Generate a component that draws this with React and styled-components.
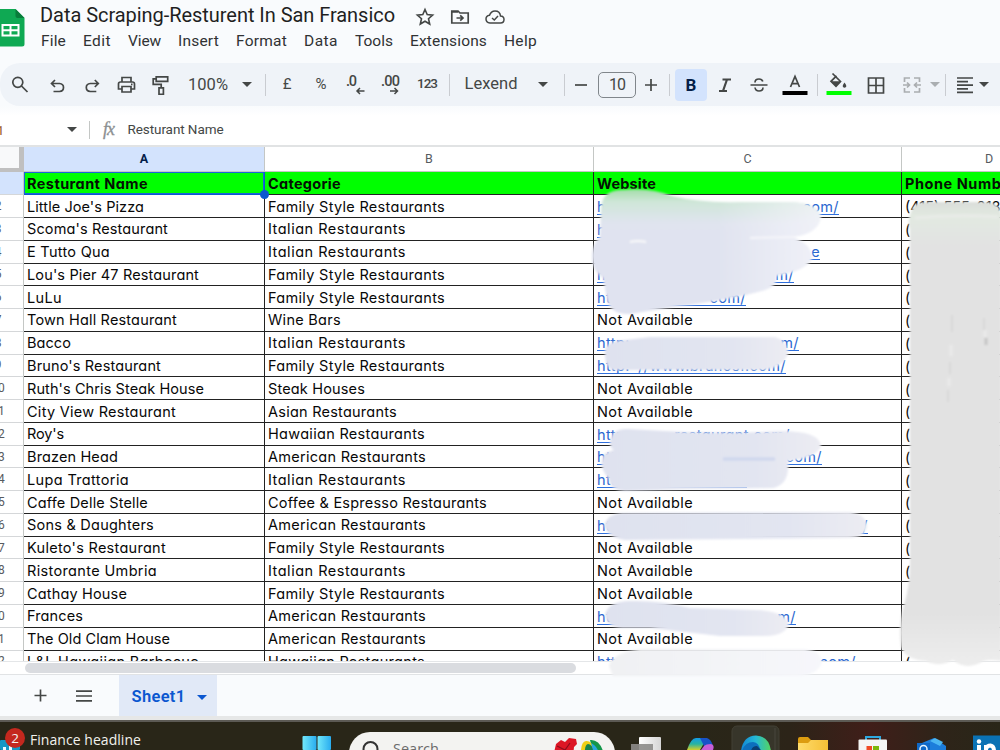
import React, { useLayoutEffect, useRef } from "react";
import styled, { createGlobalStyle, css } from "styled-components";

const Global = createGlobalStyle`
  * { box-sizing: border-box; }
  html, body { margin: 0; padding: 0; overflow: hidden; }
  body { font-family: Roboto, "Liberation Sans", sans-serif; background: #f9fbfd; color: #1f1f1f; }
`;

const Page = styled.div`
  position: relative;
  width: 1000px;
  height: 750px;
  overflow: hidden;
  display: flex;
  flex-direction: column;
  background: #f9fbfd;
`;

/* Text tracked so that it spans an exact width. */
const Span = styled.span`
  display: inline-block;
  white-space: pre;
  flex: none;
  line-height: 1;
`;
function Fit({ w, children, className }) {
  const ref = useRef(null);
  useLayoutEffect(() => {
    const el = ref.current;
    el.style.letterSpacing = "0px";
    const natural = el.getBoundingClientRect().width;
    el.style.letterSpacing = `${(w - natural) / String(children).length}px`;
  }, [w, children]);
  return <Span ref={ref} className={className}>{children}</Span>;
}

/* ---------- header ---------- */
const Header = styled.header`
  display: flex;
  height: 63px;
  flex: none;
`;
const LogoBox = styled.div`
  width: 40px;
  padding-top: 9px;
  flex: none;
  svg { display: block; }
`;
const HeaderBody = styled.div`
  display: flex;
  flex-direction: column;
`;
const TitleLine = styled.div`
  display: flex;
  align-items: center;
  height: 32px;
`;
const Title = styled(Fit)`
  font-size: 20px;
  color: #1f1f1f;
  margin: -2px 20px 0 0;
`;
const TitleIcons = styled.div`
  display: flex;
  align-items: center;
  gap: 15px;
  padding-top: 2px;
  svg { display: block; }
`;
const MenuBar = styled.nav`
  display: flex;
  gap: 17px;
  padding: 2px 0 0 1px;
  font-size: 15.5px;
  color: #303234;
`;

/* ---------- toolbar ---------- */
const Toolbar = styled.div`
  display: flex;
  align-items: center;
  height: 43px;
  flex: none;
  padding-left: 2px;
  border-radius: 20px 0 0 20px;
  background: #eff3f8;
  color: #444746;
`;
const Slot = styled.div`
  width: ${(p) => p.$w}px;
  flex: none;
  height: 43px;
  display: flex;
  align-items: center;
  justify-content: center;
  font-size: ${(p) => p.$size || 16}px;
  font-weight: ${(p) => p.$weight || 400};
  opacity: ${(p) => (p.$dim ? 0.4 : 1)};
  padding-top: ${(p) => p.$down || 0}px;
  padding-bottom: ${(p) => p.$up || 0}px;
  svg { flex: none; display: block; }
`;
const Sep = styled.i`
  width: 1px;
  height: 22px;
  background: #c9ccd1;
`;
const Caret = styled.i`
  border: 5px solid transparent;
  border-top-color: currentColor;
  border-bottom: 0;
  flex: none;
`;
const SizeBox = styled.div`
  width: 38px;
  height: 26px;
  border: 1px solid #80868b;
  border-radius: 5px;
  display: flex;
  align-items: center;
  justify-content: center;
  flex: none;
`;
const BoldButton = styled.div`
  width: 32px;
  height: 32px;
  border-radius: 4px;
  background: #d3e3fd;
  color: #041e49;
  font: 700 17px Roboto, sans-serif;
  display: flex;
  align-items: center;
  justify-content: center;
`;

/* ---------- formula bar ---------- */
const FormulaBar = styled.div`
  height: 41px;
  flex: none;
  display: flex;
  align-items: center;
  padding-top: 8px;
  background: linear-gradient(#f9fbfd 0, #fff 10px);
  border-bottom: 2px solid #e1e3e4;
  color: #444746;
  font-size: 13.5px;
`;
const NameBox = styled.div`
  width: 66px;
  margin-left: -12px;
  color: #9a5a28;
  flex: none;
`;
const CaretBox = styled.div`
  width: 35px;
  flex: none;
  display: flex;
  justify-content: center;
`;
const FxDivider = styled.i`
  width: 1px;
  height: 18px;
  background: #c4c7c5;
  margin-right: 13px;
`;
const Fx = styled.span`
  font: italic 18px "Liberation Serif", serif;
  color: #8c8f91;
  letter-spacing: -1px;
  width: 24.5px;
  -webkit-text-stroke: 0.3px #8c8f91;
`;

/* ---------- sheet ---------- */
const Sheet = styled.main`
  height: 514px;
  flex: none;
  margin-left: -27px;
  width: 1150px;
  overflow: hidden;
  background: #fff;
  display: flex;
  flex-direction: column;
`;
const widths = { n: 51, a: 241, b: 329, c: 308, d: 221 };
const ColHead = styled.div`
  width: ${(p) => widths[p.$c]}px;
  flex: none;
  height: 25.45px;
  display: flex;
  align-items: center;
  justify-content: center;
  padding-right: ${(p) => (p.$c === "d" ? 46 : 0)}px;
  padding-bottom: 2px;
  border-right: 1px solid #c4c7c5;
  border-bottom: 1px solid #c4c7c5;
  font-size: 12.5px;
  color: ${(p) => (p.$on ? "#041e49" : "#575b5f")};
  font-weight: ${(p) => (p.$on ? 700 : 400)};
  background: ${(p) => (p.$on ? "#d3e3fd" : "#fff")};
  ${(p) => p.$c === "n" && css`
    background: #f8f9fa;
    border-right: 5px solid #c0c0c0;
    border-bottom: 4px solid #c0c0c0;
  `}
`;
const Row = styled.div`
  display: flex;
  height: 22.78px;
  flex: none;
`;
const HeadRow = styled(Row)`
  height: 25.45px;
`;
const Num = styled.div`
  width: ${widths.n}px;
  flex: none;
  border-right: 1px solid #c4c7c5;
  border-bottom: 1px solid #d5d7d9;
  background: ${(p) => (p.$on ? "#d3e3fd" : "#fff")};
  font-size: 12px;
  color: #575b5f;
  display: flex;
  align-items: center;
  justify-content: center;
`;
const Cell = styled.div`
  position: relative;
  width: ${(p) => widths[p.$c]}px;
  flex: none;
  padding: 1.6px 0 0 3px;
  display: flex;
  align-items: center;
  border-right: 1px solid #222;
  border-bottom: 1px solid #222;
  color: #080808;
  font-family: Inter, "Open Sans", sans-serif;
  font-feature-settings: "cv11";
  font-size: 14.5px;
  font-weight: 400;
  ${(p) => p.$head && css`
    background: #00ff00;
    font-weight: 700;
    color: #041004;
  `}
  ${(p) => p.$active && css`
    box-shadow: inset 0 0 0 1px #1a66d8;
    border-color: #0b57d0;
  `}
`;
const Handle = styled.i`
  position: absolute;
  right: -5px;
  bottom: -5px;
  width: 9px;
  height: 9px;
  border-radius: 50%;
  background: #0b57d0;
  z-index: 2;
`;
const LinkText = styled.span`
  display: flex;
  justify-content: space-between;
  width: ${(p) => p.$w}px;
  height: 16px;
  line-height: 16px;
  border-bottom: 1px solid #2f6fdc;
  color: #2a67d0;
  white-space: pre;
  letter-spacing: 0.4px;
`;
const Scroll = styled.div`
  height: 14px;
  flex: none;
  display: flex;
  align-items: center;
  background: #fff;
  border-top: 1px solid #e4e6e8;
  border-bottom: 1px solid #e1e3e5;
  padding-left: 25px;
`;
const Thumb = styled.div`
  width: 551px;
  height: 10px;
  border-radius: 5px;
  background: #dadce0;
`;
const Tabs = styled.div`
  height: 41px;
  flex: none;
  display: flex;
  align-items: center;
  color: #444746;
  padding-left: 33px;
  svg { display: block; }
`;
const SheetTab = styled.div`
  width: 98px;
  height: 41px;
  margin-left: 27px;
  background: #e1e9f7;
  color: #0b57d0;
  display: flex;
  align-items: center;
  gap: 11px;
  padding: 3px 0 0 12.5px;
  font-weight: 600;
  font-size: 16.5px;
`;

/* ---------- taskbar ---------- */
const Taskbar = styled.footer`
  height: 34px;
  flex: none;
  border-top: 4px solid #e6e7e7;
  background: linear-gradient(90deg, #292618 0, #292618 700px, #2c2418 790px, #401e19 870px, #2e2419 940px, #292618);
  display: flex;
  overflow: hidden;
  box-shadow: inset 0 2px 0 #5c5a54;
`;
const Widget = styled.div`
  position: relative;
  width: 302px;
  flex: none;
  color: #f2f2ee;
  font: 14px "Open Sans", sans-serif;
  padding: 10px 0 0 30px;
  > svg { position: absolute; left: 0; top: 20px; }
`;
const Badge = styled.b`
  position: absolute;
  left: 5px;
  top: 8px;
  width: 20px;
  height: 20px;
  border-radius: 50%;
  background: #c4281e;
  font: 13.5px/20px "Open Sans", sans-serif;
  text-align: center;
`;
const Start = styled.div`
  width: 47px;
  flex: none;
  padding-top: 16px;
  svg { display: block; }
`;
const SearchPill = styled.div`
  width: 266px;
  height: 42px;
  flex: none;
  margin-top: 12px;
  border-radius: 21px;
  background: #f3f3f1;
  display: flex;
  align-items: flex-start;
  font: 14.5px "Open Sans", sans-serif;
  color: #6b6b6b;
  padding: 5px 10px 0 13px;
  svg { display: block; flex: none; }
`;
const SearchLabel = styled.span`
  flex: 1;
  padding: 2px 0 0 13px;
`;
const Apps = styled.div`
  width: 385px;
  flex: none;
  svg { display: block; }
`;
const Smudges = styled.svg`
  position: absolute;
  left: 0;
  top: 0;
  pointer-events: none;
`;

const Icon = ({ size = 20, children, sw = 1.7, ...rest }) => (
  <svg width={size} height={size} viewBox="0 0 20 20" fill="none" stroke="#444746" strokeWidth={sw} {...rest}>{children}</svg>
);

const F = "Family Style Restaurants";
const I = "Italian Restaurants";
const AM = "American Restaurants";
const catWidth = {
  [F]: 177, [I]: 138, [AM]: 158, "Wine Bars": 73, "Steak Houses": 97,
  "Asian Restaurants": 129, "Hawaiian Restaurants": 157, "Coffee & Espresso Restaurants": 219,
};
const rows = [
  ["Little Joe's Pizza", 117, F, 242, "com/", "(415) 555-0184"],
  ["Scoma's Restaurant", 141, I, 150, ""],
  ["E Tutto Qua", 83, I, 223, "e"],
  ["Lou's Pier 47 Restaurant", 172, F, 197, "m/"],
  ["LuLu", 35, F, 149, "com/"],
  ["Town Hall Restaurant", 150, "Wine Bars"],
  ["Bacco", 44, I, 202, "m/"],
  ["Bruno's Restaurant", 134, F, 189, "//www.brunosf.com/"],
  ["Ruth's Chris Steak House", 177, "Steak Houses"],
  ["City View Restaurant", 149, "Asian Restaurants"],
  ["Roy's", 37, "Hawaiian Restaurants", 193, "restaurant.com/"],
  ["Brazen Head", 91, AM, 225, ".com/"],
  ["Lupa Trattoria", 102, I, 150, ""],
  ["Caffe Delle Stelle", 121, "Coffee & Espresso Restaurants"],
  ["Sons & Daughters", 127, AM, 271, "/"],
  ["Kuleto's Restaurant", 139, F],
  ["Ristorante Umbria", 130, I],
  ["Cathay House", 100, F],
  ["Frances", 56, AM, 199, "m/"],
  ["The Old Clam House", 143, AM],
  ["L&L Hawaiian Barbecue", 172, "Hawaiian Restaurants", 259, "com/"],
];
const hiddenPhone = ["Cathay House", "Frances", "The Old Clam House"];
const menus = [["File", 25], ["Edit", 28], ["View", 33], ["Insert", 41], ["Format", 51], ["Data", 34], ["Tools", 38], ["Extensions", 77], ["Help", 33]];

export default function App() {
  return (
    <Page>
      <Global />
      <Header>
        <LogoBox>
          <svg width="26" height="38" viewBox="0 0 26 38">
            <path d="M-4 0H15.500L24.500 9V35Q24.500 37.500 22 37.500H-4Z" fill="#0fa953" />
            <path d="M15.500 0L24.500 9H17.500Q15.500 9 15.500 7Z" fill="#087d3b" />
            <path d="M2.500 16H18.500V26.500H2.500ZM2.500 21.200H18.500M10.500 16V26.500" fill="none" stroke="#fff" strokeWidth="2" />
          </svg>
        </LogoBox>
        <HeaderBody>
          <TitleLine>
            <Title w={355}>Data Scraping-Resturent In San Fransico</Title>
            <TitleIcons>
              <Icon sw={1.6}><path d="M10 2.500L12.200 7.600L17.600 8.100L13.500 11.700L14.700 17L10 14.200L5.300 17L6.500 11.700L2.400 8.100L7.800 7.600Z" /></Icon>
              <Icon><path d="M1.800 4H8L10 6H18.200V16H1.800ZM2 5H8M6.500 11H12.500M10.200 8.300L13 11L10.200 13.700" /></Icon>
              <Icon sw={1.5}><path d="M5 16Q1 15.500 1 12Q1 8.800 4.500 8.300Q6 4 10 4Q15 4 15.500 9Q19 9.200 19 12.500Q19 16 15.500 16ZM7 11L9.300 13L13 9" /></Icon>
            </TitleIcons>
          </TitleLine>
          <MenuBar>{menus.map(([t, w]) => <Fit key={t} w={w}>{t}</Fit>)}</MenuBar>
        </HeaderBody>
      </Header>

      <Toolbar>
        <Slot $w={36}><Icon><circle cx="7.800" cy="7.300" r="5" /><path d="M11.500 11L17.500 17" /></Icon></Slot>
        <Slot $w={38}><Icon><path d="M7.500 4.500L4 8L7.500 11.500M4 8H12Q16 8.300 16 12Q16 15.700 12 16H6" transform="translate(.5 .5)" /></Icon></Slot>
        <Slot $w={32}><Icon><path d="M12.500 4.500L16 8L12.500 11.500M16 8H8Q4 8.300 4 12Q4 15.700 8 16H14" transform="translate(.3 .5)" /></Icon></Slot>
        <Slot $w={36}><Icon><path d="M5.500 7V2.500H14.500V7M5.500 14H2V9Q2 7 4 7H16Q18 7 18 9V14H14.500M5.500 11.500H14.500V17H5.500Z" transform="translate(.5 0)" /><path d="M15 9.400H16.500" /></Icon></Slot>
        <Slot $w={32}><Icon><path d="M5.500 1.500H17V6H5.500ZM5.500 3.500H2.500V9H10.500V12M8.300 12.500H12.700V19H8.300Z" transform="translate(.7 .3)" /></Icon></Slot>
        <Slot $w={64} $size={16.5} $down={2}><Fit w={40}>100%</Fit></Slot>
        <Slot $w={14}><Caret /></Slot>
        <Slot $w={22}><Sep /></Slot>
        <Slot $w={22} $size={15} $up={2}>£</Slot>
        <Slot $w={46} $size={15} $up={2}>%</Slot>
        <Slot $w={24} $down={1}>
          <svg width="22" height="24" viewBox="0 0 22 24"><text x="1" y="13" fontSize="14.500" fontWeight="500" textLength="11" fill="#444746" fontFamily="Roboto">.0</text><path d="M19.500 18H12M15 15L12 18L15 21" fill="none" stroke="#444746" strokeWidth="1.500" /></svg>
        </Slot>
        <Slot $w={46} $down={1}>
          <svg width="22" height="24" viewBox="0 0 22 24"><text x="1" y="13" fontSize="14.500" fontWeight="500" textLength="19" fill="#444746" fontFamily="Roboto">.00</text><path d="M10 18H17.500M14.500 15L17.500 18L14.500 21" fill="none" stroke="#444746" strokeWidth="1.500" /></svg>
        </Slot>
        <Slot $w={26} $size={13.5} $weight={500} $up={1}><Fit w={20}>123</Fit></Slot>
        <Slot $w={18}><Sep /></Slot>
        <Slot $w={66} $size={16.5}><Fit w={53}>Lexend</Fit></Slot>
        <Slot $w={38}><Caret /></Slot>
        <Slot $w={4}><Sep /></Slot>
        <Slot $w={30}><Icon><path d="M4 10H16" /></Icon></Slot>
        <Slot $w={42}><SizeBox><Fit w={16}>10</Fit></SizeBox></Slot>
        <Slot $w={26}><Icon><path d="M4 10H16M10 4V16" /></Icon></Slot>
        <Slot $w={11}><Sep /></Slot>
        <BoldButton>B</BoldButton>
        <Slot $w={36}><Icon sw={2.2}><path d="M7.500 4.500H16M4 16H12M12 4.500L8 16" /></Icon></Slot>
        <Slot $w={32}><Icon><path d="M1.500 10H18.500M6 7.500Q6 4 10 4Q13 4 13.800 6.500M6 12.500Q6.500 16 10 16Q14 16 14 12.500" /></Icon></Slot>
        <Slot $w={40}>
          <svg width="26" height="26" viewBox="0 0 26 26"><path d="M8.500 15L13 4.500L17.500 15M10 11.700H16" fill="none" stroke="#444746" strokeWidth="1.700" /><rect x="0.500" y="19" width="25" height="4" fill="#000" /></svg>
        </Slot>
        <Slot $w={5}><Sep /></Slot>
        <Slot $w={38}>
          <svg width="26" height="26" viewBox="0 0 26 26"><path d="M6.500 1.500L14.500 9.500L10 14.200L5 9.300L10.500 3.800" fill="none" stroke="#444746" strokeWidth="1.700" /><path d="M4.500 9.200H14.800L10 14.500Z" fill="#444746" /><path d="M18.500 10.500Q21 13.500 20 15Q18.500 16.500 17 15Q16 13.500 18.500 10.500Z" fill="#444746" /><rect x="0.500" y="19" width="25" height="4" fill="#00ff00" /></svg>
        </Slot>
        <Slot $w={36}><Icon><path d="M2.500 3H17.500V18H2.500ZM2.500 10.500H17.500M10 3V18" /></Icon></Slot>
        <Slot $w={36} $dim><Icon><path d="M8 3H2.500V7M12 3H17.500V7M2.500 13V17H8M17.500 13V17H12M1 10H7.500M5 7.500L7.500 10L5 12.500M19 10H12.500M15 7.500L12.500 10L15 12.500" /></Icon></Slot>
        <Slot $w={10} $dim><Caret /></Slot>
        <Slot $w={11}><Sep /></Slot>
        <Slot $w={28}><Icon><path d="M2 3H18M2 6.600H13M2 10.200H18M2 13.800H13M2 17.400H18" /></Icon></Slot>
        <Slot $w={10}><Caret /></Slot>
      </Toolbar>

      <FormulaBar>
        <NameBox>A1</NameBox>
        <CaretBox><Caret /></CaretBox>
        <FxDivider />
        <Fx>fx</Fx>
        <Fit w={96}>Resturant Name</Fit>
      </FormulaBar>

      <Sheet>
        <HeadRow>
          <ColHead $c="n" />
          <ColHead $c="a" $on>A</ColHead>
          <ColHead $c="b">B</ColHead>
          <ColHead $c="c">C</ColHead>
          <ColHead $c="d">D</ColHead>
        </HeadRow>
        <Row>
          <Num $on>1</Num>
          <Cell $c="a" $head $active><Fit w={121}>Resturant Name</Fit><Handle /></Cell>
          <Cell $c="b" $head><Fit w={73}>Categorie</Fit></Cell>
          <Cell $c="c" $head><Fit w={59}>Website</Fit></Cell>
          <Cell $c="d" $head><Fit w={112}>Phone Number</Fit></Cell>
        </Row>
        {rows.map(([name, nw, cat, lw, tail, phone], i) => (
          <Row key={name}>
            <Num>{i + 2}</Num>
            <Cell $c="a"><Fit w={nw}>{name}</Fit></Cell>
            <Cell $c="b"><Fit w={catWidth[cat]}>{cat}</Fit></Cell>
            <Cell $c="c">
              {lw ? <LinkText $w={lw}><span>http:</span><span>{tail}</span></LinkText> : <Fit w={96}>Not Available</Fit>}
            </Cell>
            <Cell $c="d">{hiddenPhone.includes(name) ? null : phone || "("}</Cell>
          </Row>
        ))}
      </Sheet>

      <Scroll><Thumb /></Scroll>
      <Tabs>
        <Icon size={15} sw={2.2}><path d="M2 10H18M10 2V18" /></Icon>
        <Icon size={16} sw={2.1} style={{ marginLeft: 28 }}><path d="M0 4H20M0 10H20M0 16H20" /></Icon>
        <SheetTab><Fit w={54}>Sheet1</Fit><Caret /></SheetTab>
      </Tabs>

      <Taskbar>
        <Widget>
          <svg width="20" height="10"><rect width="20" height="10" rx="1" fill="#1597c5" /><path d="M3 10V7H6V10M9 10V6H12V10" fill="#eefaff" /></svg>
          <Badge>2</Badge>
          <Fit w={111}>Finance headline</Fit>
        </Widget>
        <Start>
          <svg width="30" height="20"><defs><linearGradient id="win" x2="1"><stop stopColor="#72e8fa" /><stop offset="1" stopColor="#29acef" /></linearGradient></defs><rect x="0.500" width="14" height="14" rx="1" fill="url(#win)" /><rect x="15.500" width="13.500" height="14" rx="1" fill="url(#win)" /></svg>
        </Start>
        <SearchPill>
          <svg width="18" height="20" viewBox="0 0 18 20"><circle cx="8.500" cy="12" r="7" fill="none" stroke="#333" strokeWidth="2" /><path d="M13 17L18 21" stroke="#333" strokeWidth="2" /></svg>
          <SearchLabel>Search</SearchLabel>
          <svg width="54" height="22" viewBox="0 0 54 22">
            <path d="M2 20L5 7L10 3L14 5L18 1L25 2L26 7L23 10L22 20Z" fill="#dc1625" />
            <path d="M6 9L14 13L19 6" stroke="#8a0d1c" strokeWidth="1.200" fill="none" />
            <path d="M39 3Q48 2 52 14V22H44Z" fill="#13974a" />
            <path d="M30 20Q29 5 35 4Q42 3 46 20Z" fill="#efcf16" />
            <path d="M34 20Q33 8 37 7Q43 8 44 20Z" fill="#17834c" />
            <path d="M40 6Q47 9 49 20H44Z" fill="#27a7df" />
          </svg>
        </SearchPill>
        <Apps>
          <svg width="385" height="30" viewBox="615 720 385 30">
            <defs>
              <linearGradient id="paper" x2="1"><stop stopColor="#fff" /><stop offset="1" stopColor="#d5d5d5" /></linearGradient>
              <linearGradient id="edge" x2="1"><stop stopColor="#1187d8" /><stop offset=".5" stopColor="#25b9d4" /><stop offset="1" stopColor="#56d45e" /></linearGradient>
              <linearGradient id="cop" y2="1" x2="0"><stop stopColor="#129be8" /><stop offset=".5" stopColor="#28b3a0" /><stop offset="1" stopColor="#d6cf28" /></linearGradient>
              <linearGradient id="fold" x2="1"><stop stopColor="#ffdc6c" /><stop offset="1" stopColor="#f5bf36" /></linearGradient>
            </defs>
            <rect x="639" y="737" width="22" height="15" rx="1" fill="url(#paper)" />
            <rect x="631" y="744" width="22" height="8" fill="#8c8b88" opacity=".9" />
            <path d="M687 750Q691 738 696 738H707L700 750Z" fill="url(#cop)" />
            <path d="M700 738H707Q711 739 713 746H704Z" fill="#1853c8" />
            <path d="M701 750L704 746Q706 744 711 744Q715 745 713 750Z" fill="#c85fd8" />
            <rect x="732" y="726" width="47" height="34" rx="5" fill="#37352a" stroke="#424034" />
            <path d="M775 728V750" stroke="#49473c" strokeWidth="1" />
            <path d="M741 751Q743 736 756 735.500Q769 736 771 751Z" fill="url(#edge)" />
            <path d="M742 751Q745 742 753 742Q760 743 760 751Z" fill="#0d6fbd" />
            <path d="M751 751Q752 746 757 746L762 751Z" fill="#0a3f73" />
            <path d="M798 739Q798 737 800 737H808L811 740H826V750H798Z" fill="#dc9c10" />
            <path d="M798 743H808L811 740H828V751H798Z" fill="url(#fold)" />
            <path d="M866 741V737H880V741" fill="none" stroke="#2ea8df" strokeWidth="2" />
            <rect x="858.500" y="739.500" width="28.500" height="12" rx="1" fill="#f5f5f4" />
            <rect x="866.500" y="746" width="5.500" height="5" fill="#f04a24" /><rect x="873" y="746" width="6" height="5" fill="#7cb80b" />
            <path d="M917 745L934 738L946 746V751H917Z" fill="#1c7ddb" />
            <path d="M930 741L935 738L943 742L940 746Z" fill="#4bb6f2" />
            <path d="M917 743H930V751H917Z" fill="#0f68c7" /><circle cx="923.500" cy="749" r="3.500" fill="none" stroke="#e8f5ff" strokeWidth="1.500" />
            <rect x="973" y="735.500" width="30" height="15" fill="#0a72b4" />
            <circle cx="979" cy="741.500" r="2.200" fill="#fff" /><path d="M979 745V751M986 751V745M986 749Q987 745.500 990.500 745.500Q994 746 994 751" stroke="#fff" strokeWidth="4" fill="none" />
          </svg>
        </Apps>
      </Taskbar>

      <Smudges width="1000" height="750" viewBox="0 0 1000 750">
        <defs>
          <linearGradient id="green" gradientUnits="userSpaceOnUse" x1="0" y1="189" x2="0" y2="232"><stop stopColor="#a3dda9" /><stop offset=".3" stopColor="#cfe6d8" /><stop offset=".8" stopColor="#e0e4ef" /><stop offset="1" stopColor="#e0e3f0" /></linearGradient>
          <linearGradient id="fade" x2="1"><stop offset=".55" stopColor="#f4f5fa" stopOpacity="0" /><stop offset="1" stopColor="#f4f5fa" stopOpacity=".8" /></linearGradient>
          <linearGradient id="lav" x2="1"><stop stopColor="#dfe2ef" /><stop offset=".7" stopColor="#e2e5f1" /><stop offset="1" stopColor="#ececf3" /></linearGradient>
          <linearGradient id="phone" gradientUnits="userSpaceOnUse" x1="0" y1="200" x2="0" y2="660"><stop stopColor="#d9dcd8" /><stop offset=".035" stopColor="#e2e9e1" /><stop offset=".1" stopColor="#e2e2e2" /><stop offset=".9" stopColor="#e2e2e2" /><stop offset="1" stopColor="#ececec" /></linearGradient>
          <linearGradient id="pale" x2="1"><stop stopColor="#f0f1f3" /><stop offset="1" stopColor="#f6f7fb" /></linearGradient>
          <filter id="soft" x="-5%" y="-5%" width="110%" height="110%"><feGaussianBlur stdDeviation="0.9" /></filter>
        </defs>
        <g filter="url(#soft)">
          <path d="M601 210Q601 190 622 190Q650 187 672 196Q700 203 740 202H790Q819 203 821 217Q818 234 792 237Q812 244 812 258Q808 270 776 276Q778 286 765 290Q730 300 680 306L630 314Q610 315 607 299L603 278Q591 270 592 254Q593 243 600 237Z" fill="url(#green)" />
          <path d="M601 210Q601 190 622 190Q650 187 672 196Q700 203 740 202H790Q819 203 821 217Q818 234 792 237Q812 244 812 258Q808 270 776 276Q778 286 765 290Q730 300 680 306L630 314Q610 315 607 299L603 278Q591 270 592 254Q593 243 600 237Z" fill="url(#fade)" />
          <path d="M630 242Q638 240 646 242" stroke="#fafafa" strokeWidth="2" fill="none" />
          <path d="M750 238L795 237" stroke="#f6f6fa" strokeWidth="2" fill="none" />
          <path d="M605 355Q603 341 625 340L650 337H775Q788 341 788 354Q783 367 765 370H612Q605 366 605 355Z" fill="url(#lav)" />
          <path d="M610 443Q611 428 628 429L665 431Q730 434 780 431Q820 431 821 446Q817 458 788 461Q790 484 773 488L690 489L625 491Q610 490 609 479Q600 469 602 460Q603 452 614 450Q610 448 610 443Z" fill="url(#lav)" />
          <path d="M723 459H775" stroke="#cdd6ed" strokeWidth="3" />
          <path d="M604 525Q608 514 622 513L850 512Q867 515 867 527Q864 538 848 538L625 540Q608 538 604 525Z" fill="url(#lav)" />
          <path d="M605 615Q608 601 630 601Q660 600 690 608L755 610Q785 611 789 624Q785 636 765 636H720L650 628H622Q607 627 605 615Z" fill="url(#lav)" />
          <path d="M609 666Q612 653 640 649H805Q821 651 822 662Q819 674 800 676H613Z" fill="url(#pale)" />
          <path d="M911 212Q914 202 925 202H985Q999 202 1001 214V661Q985 658 980 663Q965 670 953 660Q938 668 926 661Q906 660 901 647Q898 625 904 605Q910 585 910 565V230Q907 220 911 212Z" fill="url(#phone)" />
          <path d="M915 218Q960 214 998 217" stroke="#e8ebe7" strokeWidth="3" fill="none" />
          <path d="M952 315V332M950 362V374M948 390V402M984 318V330" stroke="#d8d8d8" strokeWidth="2" />
          <path d="M951 345V356M985 330V337M949 378V386" stroke="#eaeaea" strokeWidth="3" />
          <path d="M986 338V345" stroke="#c4c4c4" strokeWidth="3" />
        </g>
      </Smudges>
    </Page>
  );
}
